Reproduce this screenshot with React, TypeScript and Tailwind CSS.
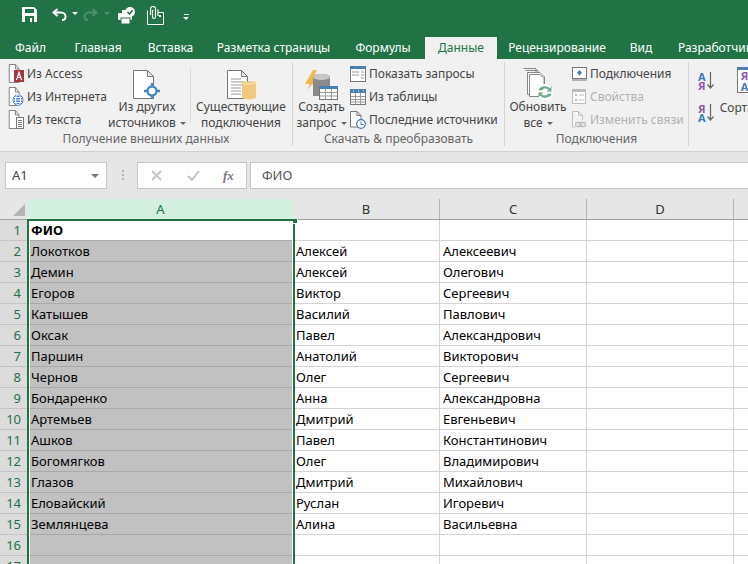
import type { ReactNode } from "react";

const rows = [
  ["ФИО", "", ""],
  ["Локотков", "Алексей", "Алексеевич"],
  ["Демин", "Алексей", "Олегович"],
  ["Егоров", "Виктор", "Сергеевич"],
  ["Катышев", "Василий", "Павлович"],
  ["Оксак", "Павел", "Александрович"],
  ["Паршин", "Анатолий", "Викторович"],
  ["Чернов", "Олег", "Сергеевич"],
  ["Бондаренко", "Анна", "Александровна"],
  ["Артемьев", "Дмитрий", "Евгеньевич"],
  ["Ашков", "Павел", "Константинович"],
  ["Богомягков", "Олег", "Владимирович"],
  ["Глазов", "Дмитрий", "Михайлович"],
  ["Еловайский", "Руслан", "Игоревич"],
  ["Землянцева", "Алина", "Васильевна"],
  ["", "", ""],
  ["", "", ""],
];

const tabs = [
  { label: "Файл", w: "w-[61px]" },
  { label: "Главная", w: "w-[74px]" },
  { label: "Вставка", w: "w-[71px]" },
  { label: "Разметка страницы", w: "w-[135px]" },
  { label: "Формулы", w: "w-[84px]" },
  { label: "Данные", w: "w-[72px]", active: true },
  { label: "Рецензирование", w: "w-[120px]" },
  { label: "Вид", w: "w-[48px]" },
  { label: "Разработчик", w: "w-[100px]" },
];

const Caret = ({ className = "border-t-[#666]" }: { className?: string }) => (
  <span className={`inline-block h-0 w-0 border-x-[3px] border-t-[3px] border-x-transparent ${className}`} />
);

/* page outline with a folded corner, used by most ribbon icons */
const DOC = "M1.5 .5H9L13.5 5V18.5H1.5ZM9 .5V5H13.5";

function SaveIcon() {
  return (
    <svg width="15" height="15" viewBox="0 0 15 15">
      <path d="M0 0H12L15 3V15H0Z" fill="#fff" />
      <rect x="3" y="2" width="9" height="4" fill="#217346" />
      <rect x="3" y="9" width="9" height="6" fill="#217346" />
      <rect x="8" y="11" width="2" height="4" fill="#fff" />
    </svg>
  );
}

function UndoIcon({ color }: { color: string }) {
  return (
    <svg width="15" height="13" viewBox="0 0 15 13" fill="none" stroke={color} strokeWidth="2">
      <path d="M5.5 1L1.5 4.5L5.5 8" />
      <path d="M2 4.5H9C12 4.5 13.5 6.5 13.5 8.5C13.5 10.5 12 12 10 12" />
    </svg>
  );
}

function PrintCheckIcon() {
  return (
    <svg width="18" height="18" viewBox="0 0 18 18">
      <rect x="0" y="6" width="14" height="7" rx="1" fill="#fff" />
      <rect x="3" y="11" width="9" height="6" fill="#fff" stroke="#217346" />
      <rect x="4" y="3" width="6" height="4" fill="#fff" />
      <circle cx="12" cy="5" r="5" fill="#fff" />
      <path d="M9.5 5L11.5 7L14.5 3.2" fill="none" stroke="#217346" strokeWidth="1.5" />
    </svg>
  );
}

function AttachIcon() {
  return (
    <svg width="17" height="19" viewBox="0 0 17 19" fill="none" stroke="#fff">
      <path d="M.5 4.5V18.5H16.5V6.5H11" />
      <path d="M3.5 9V3C3.5 1.5 4.5 .5 6 .5C7.5 .5 8.5 1.5 8.5 3V11C8.5 13 5.5 13 5.5 11V4" strokeWidth="1.2" />
      <path d="M11 3.5V10" strokeWidth="1.2" />
      <rect x="12" y="9" width="2" height="2" fill="#fff" stroke="none" />
    </svg>
  );
}

function AccessIcon() {
  return (
    <svg width="16" height="19" viewBox="0 0 16 19">
      <path d={DOC} fill="#fff" stroke="#777" transform="scale(.82 1)" />
      <rect x="6" y="6" width="10" height="12" fill="#a4373a" />
      <path d="M8.5 16L11 8.5L13.5 16M9.5 13.5H12.5" fill="none" stroke="#fff" strokeWidth="1.2" />
    </svg>
  );
}

function WebIcon() {
  return (
    <svg width="16" height="19" viewBox="0 0 16 19">
      <path d={DOC} fill="#fff" stroke="#777" transform="scale(.82 1)" />
      <circle cx="10" cy="13" r="5.5" fill="#4a86c5" />
      <path d="M5 13H15M6 10.5H14M6 15.5H14" stroke="#fff" />
      <ellipse cx="10" cy="13" rx="2.5" ry="5" fill="none" stroke="#fff" />
    </svg>
  );
}

function TextIcon() {
  return (
    <svg width="16" height="19" viewBox="0 0 16 19">
      <path d={DOC} fill="#fff" stroke="#777" transform="scale(.82 1)" />
      <rect x="8.5" y="7.5" width="7" height="11" fill="#fff" stroke="#777" />
      <path d="M10 10.5H14M10 12.5H14M10 14.5H14M10 16.5H14" stroke="#777" />
    </svg>
  );
}

function OtherSourcesIcon() {
  return (
    <svg width="28" height="30" viewBox="0 0 28 30">
      <path d="M.5 .5H14.5L20.5 6.5V28.5H.5ZM14.5 .5V6.5H20.5" fill="#fff" stroke="#777" />
      <circle cx="19" cy="21" r="4.5" fill="#fff" stroke="#4a86c5" strokeWidth="2.4" />
      <path d="M19 13V16M19 26V29M11 21H14M24 21H27" stroke="#4a86c5" strokeWidth="2.4" />
    </svg>
  );
}

function ExistingIcon() {
  return (
    <svg width="29" height="30" viewBox="0 0 29 30">
      <path d="M.5 .5H14.5L20.5 6.5V28.5H.5ZM14.5 .5V6.5H20.5" fill="#fff" stroke="#777" />
      <path d="M4 9H14M4 12H17M4 15H17M4 18H14M4 21H14M4 24H14" stroke="#999" />
      <path d="M15 13C15 10.5 29 10.5 29 13V27C29 30 15 30 15 27Z" fill="#f0c97e" />
      <path d="M15 13C15 15.5 29 15.5 29 13" fill="#f7dda8" />
    </svg>
  );
}

function QueryIcon() {
  return (
    <svg width="33" height="30" viewBox="0 0 33 30">
      <path d="M8 0L0 14H5L2 20L13 8H8L12 0Z" fill="#f0b94e" />
      <path d="M8 7C8 3 25 3 25 7V26H8Z" fill="#8a8a8a" />
      <ellipse cx="16.5" cy="7" rx="8.5" ry="3" fill="#c8c8c8" />
      <rect x="14.5" y="16.5" width="18" height="13" fill="#fff" stroke="#777" />
      <rect x="14" y="16" width="19" height="3" fill="#4a7eb5" />
      <path d="M15 22.5H32M15 26H32M20.5 19V29M26.5 19V29" stroke="#999" />
    </svg>
  );
}

function ShowQueriesIcon() {
  return (
    <svg width="16" height="16" viewBox="0 0 16 16">
      <rect x=".5" y=".5" width="15" height="15" fill="#fff" stroke="#777" />
      <rect x="0" y="0" width="16" height="3" fill="#4a7eb5" />
      <path d="M2 6H9M2 9H9M11 6H14M11 9H14M11 12H14" stroke="#999" />
    </svg>
  );
}

function TableIcon() {
  return (
    <svg width="16" height="16" viewBox="0 0 16 16">
      <rect x=".5" y=".5" width="15" height="15" fill="#fff" stroke="#777" />
      <rect x="0" y="0" width="16" height="4" fill="#4a7eb5" />
      <path d="M1 7.5H15M1 10.5H15M1 13H15M5.5 4V15M10.5 4V15" stroke="#999" />
      <path d="M3 2H4M8 2H9M13 2H14" stroke="#fff" />
    </svg>
  );
}

function RecentIcon() {
  return (
    <svg width="16" height="18" viewBox="0 0 16 18">
      <path d="M.5 .5H7L11 4.5V16H.5ZM7 .5V4.5H11" fill="#fff" stroke="#777" />
      <circle cx="11" cy="13" r="4.3" fill="#fff" stroke="#3e7ab8" strokeWidth="1.2" />
      <path d="M11 10.5V13.5H13.5" fill="none" stroke="#3e7ab8" />
    </svg>
  );
}

function RefreshAllIcon() {
  return (
    <svg width="30" height="32" viewBox="0 0 30 32">
      <path d="M.5 .5H13V22" fill="none" stroke="#888" />
      <path d="M2.5 2.5H15V24" fill="none" stroke="#888" />
      <path d="M4.5 4.5H17L21.5 9V26.5H4.5Z" fill="#fff" stroke="#888" />
      <path d="M6.5 6.5H17L21 10.5V28.5H6.5Z" fill="#fff" stroke="#888" />
      <circle cx="22" cy="24" r="8" fill="#fff" />
      <path d="M15.5 22C17 17.5 24 17 27 20.5L28.5 18V23.5H23.5L25.5 21.8C23.5 20 20.5 20 19 22.5Z" fill="#6cab8a" />
      <path d="M28.5 26C27 30.5 20 31 17 27.5L15.5 30V24.5H20.5L18.5 26.2C20.5 28 23.5 28 25 25.5Z" fill="#6cab8a" />
    </svg>
  );
}

function ConnectionsIcon() {
  return (
    <svg width="15" height="14" viewBox="0 0 15 14">
      <rect x=".5" y=".5" width="14" height="11" fill="#fff" stroke="#777" />
      <path d="M0 13H15" stroke="#777" />
      <path d="M7.5 3L10 5.7L7.5 8.4L5 5.7Z" fill="#3e7ab8" />
    </svg>
  );
}

function PropertiesIcon() {
  return (
    <svg width="14" height="15" viewBox="0 0 14 15">
      <rect x=".5" y=".5" width="13" height="14" fill="#fbfbfb" stroke="#bdbdbd" />
      <path d="M0 2H14" stroke="#bdbdbd" strokeWidth="2" />
      <rect x="3" y="5" width="2" height="2" fill="#bdbdbd" />
      <rect x="3" y="10" width="2" height="2" fill="#bdbdbd" />
      <path d="M7 6H12M7 11H12" stroke="#bdbdbd" />
    </svg>
  );
}

function EditLinksIcon() {
  return (
    <svg width="16" height="17" viewBox="0 0 16 17" fill="none" stroke="#bdbdbd">
      <path d="M1.5 .5H7.5L11.5 4.5V9M4 16H1.5V.5M7.5 .5V4.5H11.5" fill="#fbfbfb" />
      <rect x="4.5" y="11.5" width="6" height="4" rx="2" strokeWidth="1.3" />
      <rect x="8.5" y="11.5" width="6" height="4" rx="2" strokeWidth="1.3" />
    </svg>
  );
}

function SortIcon({ flip }: { flip?: boolean }) {
  const first = flip ? "Я" : "А";
  const second = flip ? "А" : "Я";
  const colorOf = (c: string) => (c === "А" ? "text-[#3e7ab8]" : "text-[#8a5aa8]");
  return (
    <div className="flex items-center gap-px">
      <div className="flex flex-col text-[11px] font-bold leading-[9px]">
        <span className={colorOf(first)}>{first}</span>
        <span className={colorOf(second)}>{second}</span>
      </div>
      <svg width="7" height="17" viewBox="0 0 7 17" fill="none" stroke="#666" strokeWidth="1.2">
        <path d="M3.5 0V16M.5 12.5L3.5 16L6.5 12.5" />
      </svg>
    </div>
  );
}

function Small({ icon, label, disabled }: { icon: ReactNode; label: string; disabled?: boolean }) {
  return (
    <div className={`flex h-[23px] items-center whitespace-nowrap ${disabled ? "text-[#b1b1b1]" : "text-[#444]"}`}>
      <div className="mr-[3px] flex w-[16px] justify-center">{icon}</div>
      {label}
    </div>
  );
}

function Big({ icon, lines, caret, w }: { icon: ReactNode; lines: string[]; caret?: boolean; w: string }) {
  return (
    <div className={`flex flex-col items-center text-center leading-[16px] text-[#444] ${w}`}>
      <div className="flex h-[38px] w-full items-end justify-center">{icon}</div>
      <div className="mt-[-1px] whitespace-nowrap">{lines[0]}</div>
      <div className="flex items-center gap-[4px] whitespace-nowrap">
        {lines[1]}
        {caret && <Caret />}
      </div>
    </div>
  );
}

function Group({ label, w, children }: { label: string; w: string; children: ReactNode }) {
  return (
    <div className={`flex h-[84px] shrink-0 flex-col border-r border-[#d4d4d4] ${w}`}>
      <div className="flex h-[69px] flex-1">{children}</div>
      <div className="text-center text-[12px] leading-[15px] text-[#666]">{label}</div>
    </div>
  );
}

export default function App() {
  return (
    <div className="h-[564px] w-[748px] overflow-hidden bg-white font-['Noto_Sans',sans-serif] text-[12px]">
      {/* Quick access toolbar */}
      <div className="flex h-[37px] items-start bg-[#217346] pt-[7px]">
        <div className="ml-[22px]"><SaveIcon /></div>
        <div className="ml-[15px] mt-[1px]"><UndoIcon color="#fff" /></div>
        <div className="ml-[5px] mt-[5px] flex"><Caret className="border-t-white" /></div>
        <div className="ml-[5px] mt-[1px] -scale-x-100"><UndoIcon color="#4d9070" /></div>
        <div className="ml-[6px] mt-[5px] flex"><Caret className="border-t-[#4d9070]" /></div>
        <div className="ml-[8px]"><PrintCheckIcon /></div>
        <div className="ml-[11px] -mt-[1px]"><AttachIcon /></div>
        <div className="ml-[19px] mt-[7px] flex flex-col items-center gap-[2px]">
          <div className="h-px w-[5px] bg-white" />
          <Caret className="border-t-white" />
        </div>
      </div>

      {/* Tabs */}
      <div className="flex h-[22px] overflow-hidden bg-[#217346] text-[12px] leading-[22px] text-white">
        {tabs.map((t) => (
          <div
            key={t.label}
            className={`shrink-0 text-center ${t.w} ${t.active ? "bg-[#f1f1f1] text-[#217346]" : ""}`}
          >
            {t.label}
          </div>
        ))}
      </div>

      {/* Ribbon */}
      <div className="flex h-[93px] overflow-hidden border-b border-[#cfcfcf] bg-[#f1f1f1] pt-[3px]">
        <Group label="Получение внешних данных" w="w-[293px]">
          <div className="ml-[8px] w-[99px]">
            <Small icon={<AccessIcon />} label="Из Access" />
            <Small icon={<WebIcon />} label="Из Интернета" />
            <Small icon={<TextIcon />} label="Из текста" />
          </div>
          <Big w="w-[80px]" icon={<OtherSourcesIcon />} lines={["Из других", "источников"]} caret />
          <div className="ml-[3px] mt-[6px] h-[55px] w-px bg-[#d9d9d9]" />
          <Big w="w-[100px]" icon={<ExistingIcon />} lines={["Существующие", "подключения"]} />
        </Group>
        <Group label="Скачать & преобразовать" w="w-[212px]">
          <Big w="w-[57px]" icon={<QueryIcon />} lines={["Создать", "запрос"]} caret />
          <div>
            <Small icon={<ShowQueriesIcon />} label="Показать запросы" />
            <Small icon={<TableIcon />} label="Из таблицы" />
            <Small icon={<RecentIcon />} label="Последние источники" />
          </div>
        </Group>
        <Group label="Подключения" w="w-[184px]">
          <Big w="w-[66px]" icon={<RefreshAllIcon />} lines={["Обновить", "все"]} caret />
          <div>
            <Small icon={<ConnectionsIcon />} label="Подключения" />
            <Small icon={<PropertiesIcon />} label="Свойства" disabled />
            <Small icon={<EditLinksIcon />} label="Изменить связи" disabled />
          </div>
        </Group>
        <div className="relative flex flex-1 overflow-hidden text-[#444]">
          <div className="ml-[9px] flex h-[69px] flex-col justify-center gap-[14px]">
            <SortIcon />
            <SortIcon flip />
          </div>
          <div className="ml-[6px] flex flex-col items-start">
            <div className="ml-[17px] mt-[5px] h-[26px] w-[20px] shrink-0 border border-[#777] border-t-[3px] border-t-[#4a7eb5] bg-white pl-[3px] text-[11px] font-bold leading-[11px]">
              <div className="text-[#8a5aa8]">Я</div>
              <div className="text-[#3e7ab8]">А</div>
            </div>
            <div className="mt-[7px] whitespace-nowrap leading-[16px]">Сортировка</div>
          </div>
        </div>
      </div>

      {/* Formula bar */}
      <div className="flex h-[47px] items-start bg-[#e6e6e6] pt-[10px] text-[13px] text-[#444]">
        <div className="ml-[5px] flex h-[27px] w-[102px] items-center justify-between border border-[#c6c6c6] bg-white pl-[6px] pr-[7px]">
          A1
          <Caret className="border-x-[4px] border-t-[4px] border-t-[#777]" />
        </div>
        <div className="ml-[15px] mt-[8px] flex flex-col gap-[2px]">
          <div className="h-[2px] w-[2px] bg-[#b5b5b5]" />
          <div className="h-[2px] w-[2px] bg-[#b5b5b5]" />
          <div className="h-[2px] w-[2px] bg-[#b5b5b5]" />
        </div>
        <div className="ml-[13px] flex h-[27px] w-[110px] items-center border border-[#c6c6c6] bg-white">
          <svg width="11" height="11" viewBox="0 0 11 11" className="ml-[13px]" fill="none" stroke="#c4c4c4" strokeWidth="1.8">
            <path d="M1 1L10 10M10 1L1 10" />
          </svg>
          <svg width="13" height="11" viewBox="0 0 13 11" className="ml-[25px]" fill="none" stroke="#c4c4c4" strokeWidth="2">
            <path d="M1 6L5 10L12 1" />
          </svg>
          <span className="ml-[23px] font-['Liberation_Serif',serif] text-[13px] font-bold italic text-[#777]">fx</span>
        </div>
        <div className="ml-[3px] flex h-[27px] flex-1 items-center border-y border-l border-[#c6c6c6] bg-white pl-[11px] text-[#555]">
          ФИО
        </div>
      </div>

      {/* Sheet */}
      <div className="relative text-[13px] text-black">
        <div className="flex h-[21px] border-b border-[#9f9f9f] bg-[#e6e6e6] leading-[20px] text-[#333]">
          <div className="relative w-[28px] shrink-0">
            <div className="absolute bottom-[3px] right-[3px] h-0 w-0 border-b-[12px] border-l-[12px] border-b-[#b4b4b4] border-l-transparent" />
          </div>
          <div className="w-[265px] shrink-0 bg-[#d3f0e0] text-center text-[#217346]">A</div>
          <div className="w-[147px] shrink-0 border-r border-[#b5b5b5] text-center">B</div>
          <div className="w-[147px] shrink-0 border-r border-[#b5b5b5] text-center">C</div>
          <div className="w-[147px] shrink-0 border-r border-[#b5b5b5] text-center">D</div>
        </div>
        {rows.map((r, i) => (
          <div key={i} className="flex h-[21px] leading-[20px]">
            <div className="w-[28px] shrink-0 border-b border-[#c4c4c4] bg-[#dcdcdc] pr-[7px] text-right text-[#217346]">
              {i + 1}
            </div>
            <div className="w-[265px] shrink-0">
              <div
                className={`ml-[2px] mr-px h-[21px] whitespace-nowrap border-b pl-px ${
                  i === 0 ? "border-[#a9a9a9] bg-white font-bold" : "border-[#a9a9a9] bg-[#c1c1c1]"
                }`}
              >
                {r[0]}
              </div>
            </div>
            <div className="w-[147px] shrink-0 border-b border-r border-[#d4d4d4] pl-[3px]">{r[1]}</div>
            <div className="w-[147px] shrink-0 border-b border-r border-[#d4d4d4] pl-[3px]">{r[2]}</div>
            <div className="w-[147px] shrink-0 border-b border-r border-[#d4d4d4]" />
            <div className="flex-1 border-b border-[#d4d4d4]" />
          </div>
        ))}
        {/* Selection outline over column A */}
        <div className="absolute left-[27px] top-[20px] h-[400px] w-[268px] border-2 border-[#217346]" />
        <div className="absolute left-[293px] top-[20px] h-[5px] w-[5px] border-b border-r border-white bg-[#217346]" />
      </div>
    </div>
  );
}
